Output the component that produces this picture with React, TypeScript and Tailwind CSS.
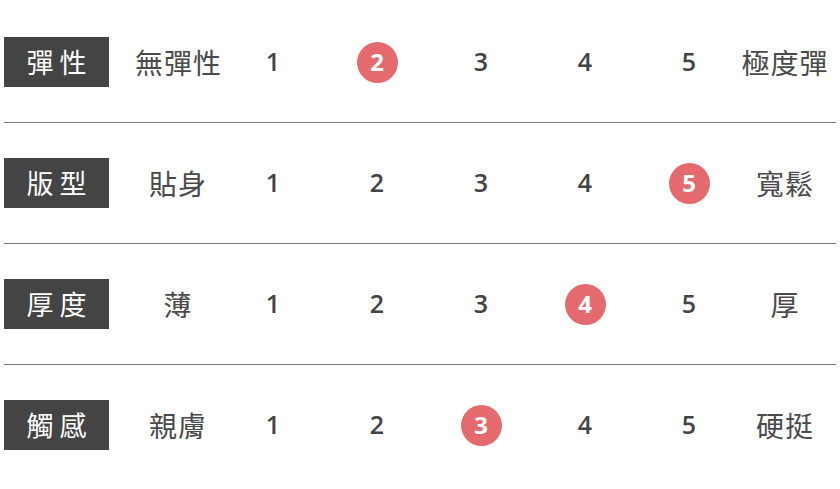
import React from 'react';

type Row = {
  label: string;
  low: string;
  high: string;
  value: number;
};

const rows: Row[] = [
  { label: '彈性', low: '無彈性', high: '極度彈', value: 2 },
  { label: '版型', low: '貼身', high: '寬鬆', value: 5 },
  { label: '厚度', low: '薄', high: '厚', value: 4 },
  { label: '觸感', low: '親膚', high: '硬挺', value: 3 },
];

const cjk = { fontFamily: '"Noto Sans CJK TC", "Noto Sans", sans-serif' };
const num = { fontFamily: '"Open Sans", "Liberation Sans", sans-serif' };

export default function App() {
  return (
    <div className="w-[840px] h-[489px] bg-white overflow-hidden pt-[37px]">
      {rows.map((row, idx) => (
        <React.Fragment key={row.label}>
          <div className="flex items-center h-[50px] pl-[4px]">
            <div
              className="w-[105px] h-[50px] bg-[#444444] text-white text-[27px] tracking-[6px] flex items-center justify-center pl-[6px]"
              style={cjk}
            >
              {row.label}
            </div>
            <div className="w-[112px] pl-[26px] text-center text-[28px] tracking-[1px] text-[#4a4a4a] whitespace-nowrap" style={cjk}>
              {row.low}
            </div>
            {[1, 2, 3, 4, 5].map((n) => (
              <div key={n} className="w-[104px] flex justify-center items-center" style={num}>
                {n === row.value ? (
                  <span className="w-[41px] h-[41px] rounded-full bg-[#e56a6e] text-white text-[24px] font-bold flex items-center justify-center">
                    {n}
                  </span>
                ) : (
                  <span className="text-[25px] font-semibold text-[#444444]">{n}</span>
                )}
              </div>
            ))}
            <div className="w-[88px] text-center text-[28px] tracking-[1px] text-[#4a4a4a] whitespace-nowrap" style={cjk}>
              {row.high}
            </div>
          </div>
          {idx < rows.length - 1 && <div className="mx-[4px] my-[35px] h-px bg-[#7a7a7a]" />}
        </React.Fragment>
      ))}
    </div>
  );
}
